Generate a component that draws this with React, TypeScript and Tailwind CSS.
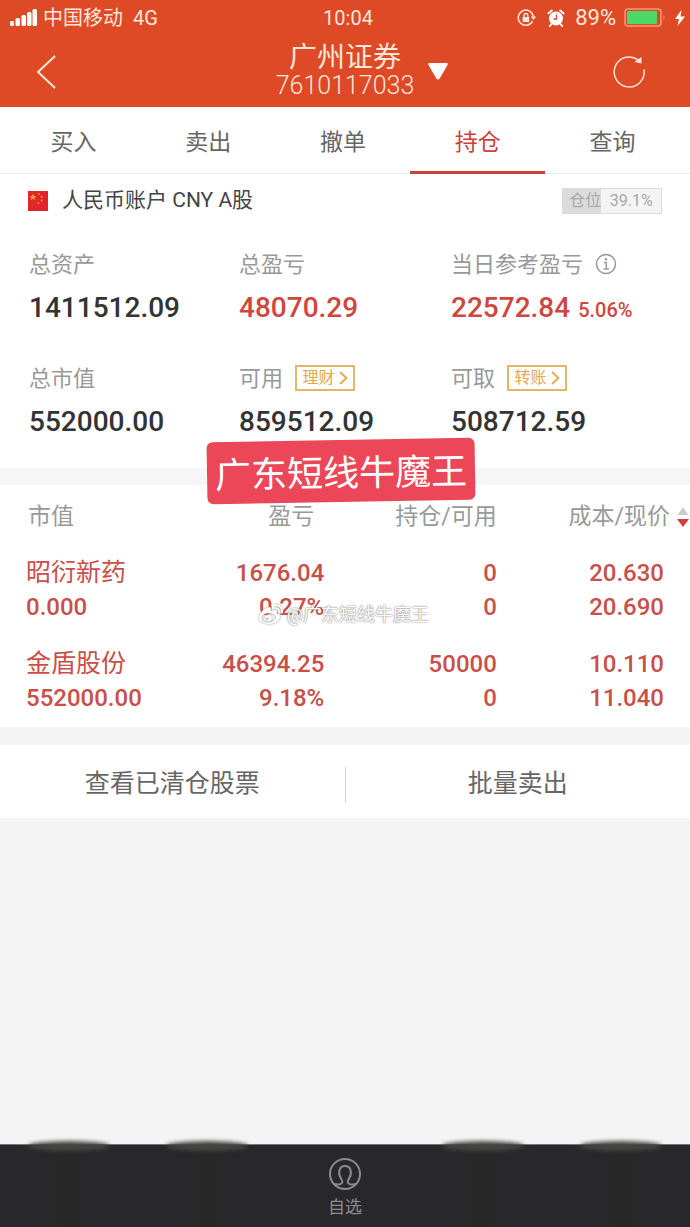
import { FaWeibo } from 'react-icons/fa';

const tabs = ['买入', '卖出', '撤单', '持仓', '查询'];

const summary = [
  { label: '总资产', value: '1411512.09' },
  { label: '总盈亏', value: '48070.29', up: true },
  { label: '当日参考盈亏', value: '22572.84', up: true, rate: '5.06%', info: true },
  { label: '总市值', value: '552000.00' },
  { label: '可用', value: '859512.09', action: '理财' },
  { label: '可取', value: '508712.59', action: '转账' },
];

const holdings = [
  { name: '昭衍新药', marketValue: '0.000', profit: '1676.04', rate: '0.27%', held: '0', available: '0', cost: '20.630', price: '20.690' },
  { name: '金盾股份', marketValue: '552000.00', profit: '46394.25', rate: '9.18%', held: '50000', available: '0', cost: '10.110', price: '11.040' },
];

function StatusBar() {
  return (
    <div className="grid h-9 grid-cols-[1fr_auto_1fr] items-center pl-2.5 pr-1 text-xl">
      <div className="flex items-center gap-1.5">
        <svg width="27" height="18" viewBox="0 0 27 18" fill="#fff">
          <rect x="0" y="12" width="4" height="5" rx="1.5" />
          <rect x="5.5" y="9" width="4.5" height="8" rx="1.5" />
          <rect x="11.5" y="6" width="4.5" height="11" rx="1.5" />
          <rect x="17" y="3" width="4.5" height="14" rx="1.5" />
          <rect x="22.5" y="0" width="4.5" height="17" rx="1.5" />
        </svg>
        <span>中国移动</span>
        <span className="ml-1">4G</span>
      </div>
      <span>10:04</span>
      <div className="flex items-center justify-end gap-2">
        <svg width="20" height="18" viewBox="0 0 20 18" fill="none" stroke="currentColor" strokeWidth="1.5">
          <path d="M15.6 12.2A7.6 7.6 0 1 1 16.4 8" />
          <path d="M13.8 7.6h5.4l-2.7 3.4z" fill="currentColor" stroke="none" />
          <rect x="5.6" y="8" width="6.6" height="5" rx="0.6" fill="currentColor" stroke="none" />
          <path d="M7 8V6.4a1.9 1.9 0 0 1 3.8 0V8" strokeWidth="1.3" />
        </svg>
        <svg className="mx-0.5" width="18" height="18" viewBox="0 0 18 18">
          <circle cx="9" cy="9.5" r="7" fill="#fff" />
          <path d="M1.5 4.3 4.8 1.6M16.5 4.3 13.200 1.6M4 15.5l-1.2 1.5M14 15.5l1.2 1.5" stroke="#fff" strokeWidth="2" strokeLinecap="round" />
          <path d="M9.5 5.5V10H6.5" fill="none" stroke="#dd4a25" strokeWidth="1.3" />
        </svg>
        <span className="text-[22px]">89%</span>
        <svg width="42" height="20" viewBox="0 0 42 20">
          <rect x="1" y="1" width="36" height="17" rx="3" fill="none" stroke="#f39a7c" strokeWidth="1.5" />
          <rect x="3" y="3" width="30" height="13" rx="1" fill="#4cd964" />
          <path d="M39.5 7c1.3.8 1.3 4.2 0 5z" fill="#f39a7c" />
        </svg>
        <svg width="12" height="18" viewBox="0 0 12 18" fill="#fff">
          <path d="M7.500 1 1 10h4l-1.500 7L11 7.500H6.500z" />
        </svg>
      </div>
    </div>
  );
}

function Header() {
  return (
    <header className="bg-[#dd4a25] text-[#ffe6dc]">
      <StatusBar />
      <div className="grid h-[71px] grid-cols-[1fr_auto_1fr] items-center">
        <button aria-label="返回" className="ml-9 w-fit">
          <svg width="20" height="34" viewBox="0 0 20 34" fill="none" stroke="currentColor" strokeWidth="2">
            <path d="M19 1 2 17l17 16" />
          </svg>
        </button>
        <h1 className="text-center leading-7">
          <span className="block text-[28px]">广州证券</span>
          <span className="block text-[25px] font-light">7610117033</span>
        </h1>
        <div className="flex items-center justify-between pl-3.5 pr-11">
          <button aria-label="切换账户">
            <svg width="20" height="17" viewBox="0 0 20 17" fill="#fff">
              <path d="M1.5 0h17q2 0 1 2l-7.5 13q-2 3-4 0L.5 2q-1-2 1-2z" />
            </svg>
          </button>
          <button aria-label="刷新">
            <svg width="34" height="34" viewBox="0 0 34 34" fill="none" stroke="currentColor" strokeWidth="1.5">
              <path d="M32 14.5A15 15 0 1 1 26 4.800" />
              <path d="M29.500 2v6.500l-7-1.500z" fill="currentColor" stroke="none" />
            </svg>
          </button>
        </div>
      </div>
    </header>
  );
}

function Tabs() {
  return (
    <nav className="flex h-[67px] border-b border-[#ececec] bg-white pl-1.5 pr-2.5">
      {tabs.map((tab) => (
        <button
          key={tab}
          className={`-mb-px flex-1 border-b-[3px] pt-2 text-[23px] ${
            tab === '持仓' ? 'border-[#cf3d3d] text-[#cf3d3d]' : 'border-transparent text-[#666]'
          }`}
        >
          {tab}
        </button>
      ))}
    </nav>
  );
}

function Flag() {
  return (
    <svg width="20" height="20" viewBox="0 0 20 20">
      <rect width="20" height="20" fill="#e0262b" />
      <path d="M5 2.5l1 2.5h2.6L6.5 6.6l.8 2.6L5 7.6 2.7 9.2l.8-2.6L1.4 5H4z" fill="#f7a531" />
      <circle cx="11" cy="3" r="1" fill="#f28a2c" />
      <circle cx="13.5" cy="6" r="1" fill="#f28a2c" />
      <circle cx="13.5" cy="9.5" r="1" fill="#f28a2c" />
      <circle cx="10.5" cy="12" r="1" fill="#f28a2c" />
    </svg>
  );
}

function Account() {
  return (
    <section className="bg-white pb-[18px]">
      <div className="flex h-[54px] items-center justify-between px-7">
        <h2 className="flex items-center gap-3.5 text-[21px] text-[#444]">
          <Flag />
          人民币账户 CNY A股
        </h2>
        <div className="flex h-[26px] w-[100px] items-center border border-[#dcdcdc] bg-[#f4f4f4] text-base text-[#a8a8a8]">
          <span className="flex h-full w-[39.1%] items-center justify-end bg-[#dcdcdc]">仓位</span>
          <span className="flex-1 text-center">39.1%</span>
        </div>
      </div>
      <dl className="grid grid-cols-[210fr_212fr_239fr] gap-y-[26px] pl-[29px] pt-5">
        {summary.map((item) => (
          <div key={item.label}>
            <dt className="flex h-8 items-center gap-3 text-[22px] text-[#999]">
              {item.label}
              {item.info && (
                <svg width="22" height="22" viewBox="0 0 22 22" fill="none" stroke="#999" strokeWidth="1.5">
                  <circle cx="11" cy="11" r="9.5" />
                  <path d="M9 9.5h2.3V16M8.5 16h5.5" />
                  <circle cx="11" cy="6.3" r="1.2" fill="#999" stroke="none" />
                </svg>
              )}
              {item.action && (
                <button className="flex h-[26px] w-[60px] items-center justify-center gap-1 border-2 border-[#e2b768] text-base text-[#e3a84c]">
                  {item.action}
                  <svg width="9" height="14" viewBox="0 0 9 14" fill="none" stroke="currentColor" strokeWidth="1.8">
                    <path d="M1 1l6.500 6L1 13" />
                  </svg>
                </button>
              )}
            </dt>
            <dd className={`text-[28px] font-medium leading-[56px] ${item.up ? 'text-[#d0453f]' : 'text-[#333]'}`}>
              {item.value}
              {item.rate && <span className="ml-2 text-xl">{item.rate}</span>}
            </dd>
          </div>
        ))}
      </dl>
    </section>
  );
}

function Sticker() {
  return (
    <div className="relative h-[17px] bg-[#f6f6f6]">
      <div className="absolute -top-7 left-[30%] z-10 flex h-[62px] -rotate-1 items-center whitespace-nowrap rounded-md bg-[#ec4758] px-2 pt-1.5 text-4xl text-white">
        广东短线牛魔王
      </div>
    </div>
  );
}

function Holdings() {
  return (
    <section className="relative bg-white">
      <table className="w-full table-fixed text-right">
        <colgroup>
          <col className="w-[27%]" />
          <col className="w-[20%]" />
          <col className="w-[25%]" />
          <col className="w-[28%]" />
        </colgroup>
        <thead>
          <tr className="h-[60px] text-[23px] text-[#999]">
            <th className="pl-7 pt-1 text-left font-normal">市值</th>
            <th className="pr-2.5 pt-1 font-normal">盈亏</th>
            <th className="pt-1 font-normal">持仓/可用</th>
            <th className="pt-1 font-normal">
              <button className="inline-flex items-center gap-1.5">
                成本/现价
                <svg width="14" height="22" viewBox="0 0 14 22">
                  <path d="M7 1l5.5 8h-11z" fill="#ccc" />
                  <path d="M1 13h12l-6 8z" fill="#cf3d3d" />
                </svg>
              </button>
            </th>
          </tr>
        </thead>
        <tbody className="text-2xl font-medium leading-[34px] text-[#c94f49]">
          {holdings.map((row) => (
            <tr key={row.name}>
              <td className="pb-3 pl-[26px] pt-[11px] text-left">
                <div className="text-[25px] font-normal leading-[34px]">{row.name}</div>
                <div>{row.marketValue}</div>
              </td>
              <td className="pb-3 pt-[11px]">
                <div>{row.profit}</div>
                <div>{row.rate}</div>
              </td>
              <td className="pb-3 pt-[11px]">
                <div>{row.held}</div>
                <div>{row.available}</div>
              </td>
              <td className="pb-3 pr-[26px] pt-[11px]">
                <div>{row.cost}</div>
                <div>{row.price}</div>
              </td>
            </tr>
          ))}
        </tbody>
      </table>
      <div className="absolute left-[37.5%] top-[116px] flex items-center gap-1 whitespace-nowrap text-lg text-white [text-shadow:0_0_1px_#888,0_0_2px_#888]">
        <FaWeibo className="size-6 drop-shadow-[0_0_1px_#888]" />
        @广东短线牛魔王
      </div>
    </section>
  );
}

function Person() {
  return (
    <svg width="34" height="34" viewBox="0 0 34 34" fill="none" stroke="currentColor" strokeWidth="2">
      <circle cx="17" cy="17" r="15" />
      <path d="M6 27c2 .5 6 .5 7.500-.5 1.500-1.300.8-3-.5-5-3.500-5.500-2-12.500 4-12.500s7.500 7 4 12.500c-1.300 2-2 3.700-.5 5 1.500 1 5.500 1 7.500.5" />
    </svg>
  );
}

function BottomBar() {
  return (
    <nav className="mt-auto grid h-[83px] grid-cols-5 border-t border-[#77777a] bg-[#28272c]">
      {[0, 1, 2, 3, 4].map((slot) =>
        slot === 2 ? (
          <button key={slot} className="flex flex-col items-center gap-1 pt-3 text-[17px] leading-6 text-[#8c8c8f]">
            <Person />
            自选
          </button>
        ) : (
          <div key={slot} className="mx-7 bg-linear-to-r from-[#28272c] via-[#272727] to-[#28272c]">
            <div className="-mt-1 h-2.5 rounded-[50%] bg-[#454641] blur-[2px]" />
          </div>
        )
      )}
    </nav>
  );
}

export default function App() {
  return (
    <div className="flex min-h-screen flex-col bg-[#f4f4f4] font-[Roboto,'Noto_Sans_CJK_SC',sans-serif]">
      <Header />
      <Tabs />
      <Account />
      <Sticker />
      <Holdings />
      <div className="mt-[18px] flex h-[73px] items-center bg-white text-[25px] text-[#666]">
        <button className="flex-1 pt-1">查看已清仓股票</button>
        <div className="mt-1.5 h-9 w-px bg-[#d4d4d4]" />
        <button className="flex-1 pt-1">批量卖出</button>
      </div>
      <BottomBar />
    </div>
  );
}
